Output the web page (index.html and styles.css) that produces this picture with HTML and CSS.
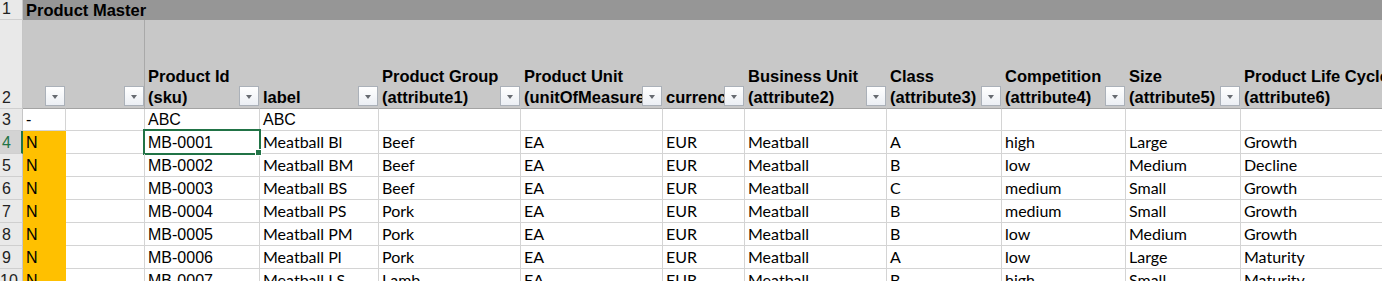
FILE: index.html
```html
<!DOCTYPE html>
<html>
<head>
<meta charset="utf-8">
<link rel="stylesheet" href="styles.css">
</head>
<body>
<div class="sheet">
  <div class="rh">1</div>
  <div class="title">Product Master</div>

  <div class="rh">2</div>
  <div class="hd"><span class="flt"></span></div>
  <div class="hd hd-b"><span class="flt"></span></div>
  <div class="hd"><span class="ht">Product Id<br>(sku)</span><span class="flt"></span></div>
  <div class="hd"><span class="ht">label</span><span class="flt"></span></div>
  <div class="hd"><span class="ht">Product Group<br>(attribute1)</span><span class="flt"></span></div>
  <div class="hd"><span class="ht">Product Unit<br>(unitOfMeasure)</span><span class="flt"></span></div>
  <div class="hd"><span class="ht">currency</span><span class="flt"></span></div>
  <div class="hd"><span class="ht">Business Unit<br>(attribute2)</span><span class="flt"></span></div>
  <div class="hd"><span class="ht">Class<br>(attribute3)</span><span class="flt"></span></div>
  <div class="hd"><span class="ht">Competition<br>(attribute4)</span><span class="flt"></span></div>
  <div class="hd"><span class="ht">Size<br>(attribute5)</span><span class="flt"></span></div>
  <div class="hd hd-last"><span class="ht">Product Life Cycle<br>(attribute6)</span><span class="flt"></span></div>

  <div class="rh">3</div>
  <div class="c ar">-</div>
  <div class="c ar"></div>
  <div class="c ar">ABC</div>
  <div class="c ar">ABC</div>
  <div class="c"></div><div class="c"></div><div class="c"></div><div class="c"></div><div class="c"></div><div class="c"></div><div class="c"></div><div class="c"></div>

  <div class="rh rh-sel">4</div>
  <div class="c ar or">N</div><div class="c"></div>
  <div class="c ar cur">MB-0001<span class="handle"></span></div>
  <div class="c">Meatball Bl</div><div class="c">Beef</div><div class="c">EA</div><div class="c">EUR</div><div class="c">Meatball</div><div class="c">A</div><div class="c">high</div><div class="c">Large</div><div class="c">Growth</div>

  <div class="rh">5</div>
  <div class="c ar or">N</div><div class="c"></div>
  <div class="c ar">MB-0002</div>
  <div class="c">Meatball BM</div><div class="c">Beef</div><div class="c">EA</div><div class="c">EUR</div><div class="c">Meatball</div><div class="c">B</div><div class="c">low</div><div class="c">Medium</div><div class="c">Decline</div>

  <div class="rh">6</div>
  <div class="c ar or">N</div><div class="c"></div>
  <div class="c ar">MB-0003</div>
  <div class="c">Meatball BS</div><div class="c">Beef</div><div class="c">EA</div><div class="c">EUR</div><div class="c">Meatball</div><div class="c">C</div><div class="c">medium</div><div class="c">Small</div><div class="c">Growth</div>

  <div class="rh">7</div>
  <div class="c ar or">N</div><div class="c"></div>
  <div class="c ar">MB-0004</div>
  <div class="c">Meatball PS</div><div class="c">Pork</div><div class="c">EA</div><div class="c">EUR</div><div class="c">Meatball</div><div class="c">B</div><div class="c">medium</div><div class="c">Small</div><div class="c">Growth</div>

  <div class="rh">8</div>
  <div class="c ar or">N</div><div class="c"></div>
  <div class="c ar">MB-0005</div>
  <div class="c">Meatball PM</div><div class="c">Pork</div><div class="c">EA</div><div class="c">EUR</div><div class="c">Meatball</div><div class="c">B</div><div class="c">low</div><div class="c">Medium</div><div class="c">Growth</div>

  <div class="rh">9</div>
  <div class="c ar or">N</div><div class="c"></div>
  <div class="c ar">MB-0006</div>
  <div class="c">Meatball Pl</div><div class="c">Pork</div><div class="c">EA</div><div class="c">EUR</div><div class="c">Meatball</div><div class="c">A</div><div class="c">low</div><div class="c">Large</div><div class="c">Maturity</div>

  <div class="rh rh-wide">10</div>
  <div class="c ar or">N</div><div class="c"></div>
  <div class="c ar">MB-0007</div>
  <div class="c">Meatball LS</div><div class="c">Lamb</div><div class="c">EA</div><div class="c">EUR</div><div class="c">Meatball</div><div class="c">B</div><div class="c">high</div><div class="c">Small</div><div class="c">Maturity</div>
</div>
</body>
</html>
```

FILE: styles.css
```css
html, body {
  margin: 0;
  padding: 0;
  background: #ffffff;
  overflow: hidden;
}

.sheet {
  display: grid;
  grid-template-columns: 23px 43px 79px 115px 119px 142px 142px 82px 142px 115px 124px 115px 200px;
  grid-template-rows: 20px 89px 22px repeat(7, 23px);
  width: 1441px;
  font-family: "Liberation Sans", Arial, sans-serif;
  font-size: 16px;
  color: #000;
}

.rh {
  box-sizing: border-box;
  background: #e9e9e9;
  border-right: 1px solid #c6c6c6;
  border-bottom: 1px solid #cfcfcf;
  font-family: "Liberation Sans", Arial, sans-serif;
  font-size: 16px;
  line-height: 20px;
  padding-left: 2px;
  display: flex;
  align-items: flex-end;
  color: #222;
  overflow: hidden;
  white-space: nowrap;
}

.rh-sel {
  background: #d3d3d3;
  color: #217346;
  border-right: 2px solid #217346;
}

.rh-wide {
  padding-left: 0;
}

.title {
  grid-column: 2 / -1;
  background: #969696;
  font-weight: bold;
  font-size: 16.5px;
  line-height: 20px;
  padding-left: 3px;
  white-space: nowrap;
}

.hd {
  position: relative;
  box-sizing: border-box;
  background: #c8c8c8;
  border-bottom: 1px solid #a3a3a3;
  border-right: 1px solid #c8c8c8;
  display: flex;
  align-items: flex-end;
  padding: 0 3px;
  overflow: hidden;
  white-space: nowrap;
}

.hd-b {
  border-right-color: #a9a9a9;
}

.ht {
  font-weight: bold;
  font-size: 16.5px;
  line-height: 21px;
}

.flt {
  position: absolute;
  right: 0;
  bottom: 2px;
  width: 20px;
  height: 20px;
  box-sizing: border-box;
  border: 1px solid #abb1b9;
  background: linear-gradient(#ffffff, #eceff4);
}

.flt::after {
  content: "";
  position: absolute;
  left: 6px;
  top: 8px;
  width: 0;
  height: 0;
  border-left: 3.5px solid transparent;
  border-right: 3.5px solid transparent;
  border-top: 4px solid #666a70;
}

.c {
  position: relative;
  box-sizing: border-box;
  border-right: 1px solid #d4d4d4;
  border-bottom: 1px solid #d4d4d4;
  display: flex;
  align-items: flex-end;
  padding: 0 3px 1px;
  font-family: Lato, "Liberation Sans", sans-serif;
  font-size: 16px;
  line-height: 20px;
  white-space: nowrap;
  overflow: hidden;
}

.c.ar {
  font-family: "Liberation Sans", Arial, sans-serif;
  padding-bottom: 0;
}

.c.or {
  background: #ffc000;
  border-color: #ffc000;
}

.c.cur {
  overflow: visible;
}

.c.cur::before {
  content: "";
  position: absolute;
  left: -2px;
  top: -2px;
  right: -2px;
  bottom: -2px;
  border: 2px solid #217346;
  pointer-events: none;
}

.handle {
  position: absolute;
  right: -3px;
  bottom: -3px;
  width: 5px;
  height: 5px;
  background: #217346;
  border: 1px solid #ffffff;
  z-index: 2;
}
```
